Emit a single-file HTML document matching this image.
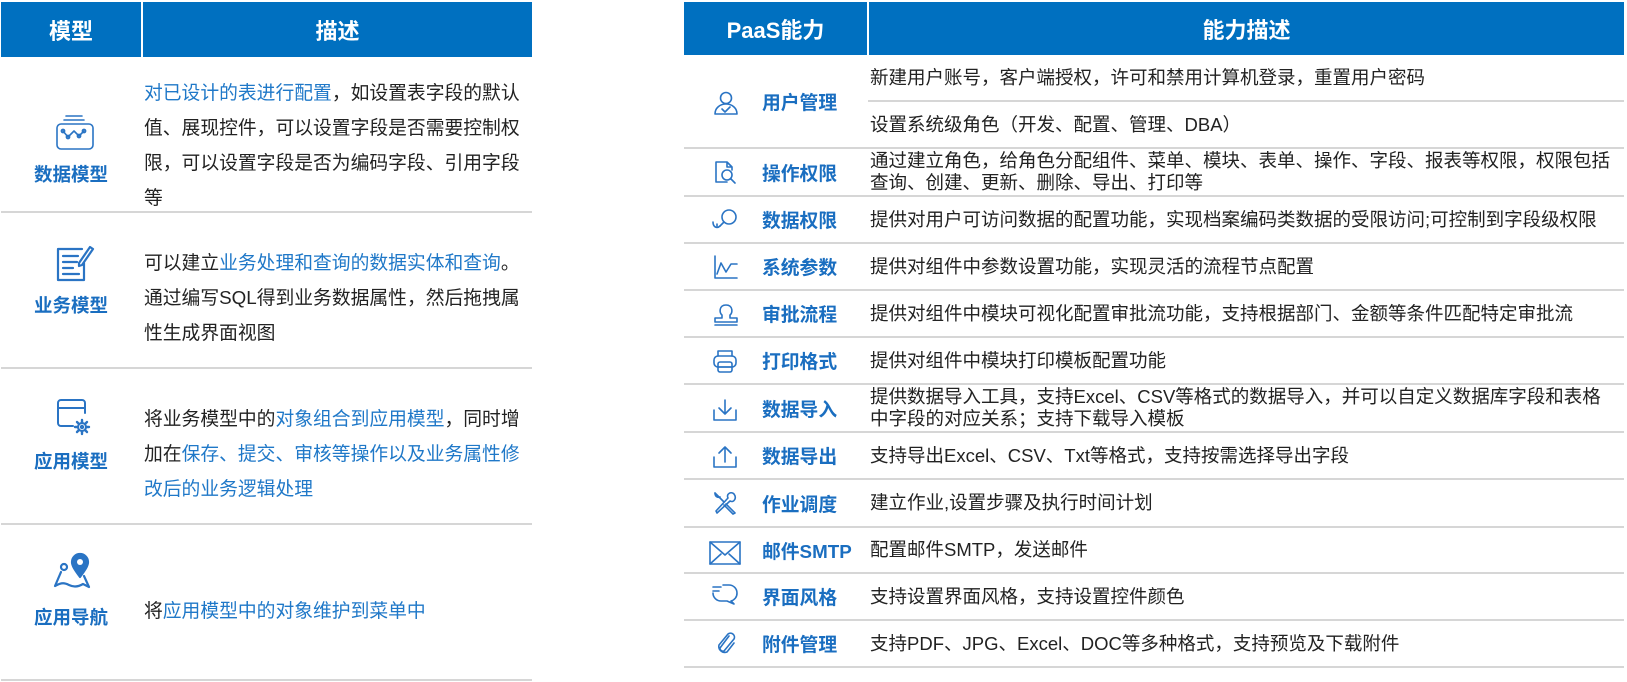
<!DOCTYPE html>
<html><head><meta charset="utf-8"><style>
*{margin:0;padding:0;box-sizing:border-box}
body{width:1627px;height:682px;background:#fff;position:relative;overflow:hidden;font-family:"Liberation Sans","Noto Sans CJK SC",sans-serif;color:#222}
.a{position:absolute}
.hd{background:#0070c0;color:#fff;font-weight:bold;font-size:22px;display:flex;align-items:center;justify-content:center}
.ln{position:absolute;height:2px;background:#d6d6d6}
.lbl{position:absolute;color:#1a6ec0;font-weight:bold;font-size:18.5px;white-space:nowrap}
.t{position:absolute;font-size:18.8px;white-space:nowrap;color:#222}
.b{color:#1f78c8}
.ic{position:absolute;fill:none;stroke:#2a74c4;stroke-width:1.6;stroke-linecap:round;stroke-linejoin:round}
.rd{position:absolute;left:870px;font-size:18.5px;white-space:nowrap;display:flex;align-items:center;line-height:22px}
.rl{position:absolute;left:762px;display:flex;align-items:center;color:#1a6ec0;font-weight:bold;font-size:18.8px;white-space:nowrap}
</style></head><body>
<div class="a hd" style="left:1px;top:2px;width:140px;height:55px">模型</div>
<div class="a hd" style="left:143px;top:2px;width:389px;height:55px">描述</div>

<div class="ln" style="left:1px;top:211px;width:531px"></div>
<div class="ln" style="left:1px;top:367px;width:531px"></div>
<div class="ln" style="left:1px;top:523px;width:531px"></div>
<div class="ln" style="left:1px;top:679px;width:531px"></div>

<div class="t" style="left:144px;top:75px;line-height:35px">
<span class="b">对已设计的表进行配置</span>，如设置表字段的默认<br>值、展现控件，可以设置字段是否需要控制权<br>限，可以设置字段是否为编码字段、引用字段<br>等</div>
<div class="t" style="left:144px;top:245px;line-height:35px">可以建立<span class="b">业务处理和查询的数据实体和查询</span>。<br>通过编写SQL得到业务数据属性，然后拖拽属<br>性生成界面视图</div>
<div class="t" style="left:144px;top:401px;line-height:35px">将业务模型中的<span class="b">对象组合到应用模型</span>，同时增<br>加在<span class="b">保存、提交、审核等操作以及业务属性修</span><br><span class="b">改后的业务逻辑处理</span></div>
<div class="t" style="left:144px;top:593px;line-height:35px">将<span class="b">应用模型中的对象维护到菜单中</span></div>

<div class="lbl" style="left:34px;top:161px">数据模型</div>
<div class="lbl" style="left:34px;top:292px">业务模型</div>
<div class="lbl" style="left:34px;top:448px">应用模型</div>
<div class="lbl" style="left:34px;top:604px">应用导航</div>

<svg class="ic" style="left:55px;top:113px" width="40" height="40" viewBox="0 0 40 40"><path d="M11 3h16M9 7h20"/><rect x="2" y="11" width="36" height="25" rx="4"/><path d="M8 18l5 6 6-6 5 5 5-5"/><circle cx="8" cy="18" r="1.6"/><circle cx="13" cy="24" r="1.6"/><circle cx="24" cy="23" r="1.6"/><circle cx="29" cy="18" r="1.6"/></svg>
<svg class="ic" style="left:55px;top:245px;stroke-width:2.2" width="40" height="38" viewBox="0 0 40 38"><path d="M27 4H3v31h26V18"/><path d="M8 11h15M8 17h14M8 23h10M8 29h16"/><path d="M35 2l3 2-11 16-3 1 0-3z"/></svg>
<svg class="ic" style="left:55px;top:398px;stroke-width:2" width="40" height="38" viewBox="0 0 40 38"><path d="M18 28H6a3 3 0 0 1-3-3V5a3 3 0 0 1 3-3h21a3 3 0 0 1 3 3v10M3 10h27"/><circle cx="27" cy="29" r="4"/><circle cx="27" cy="29" r="1.2"/><path d="M27 22v2.5M27 33.5v2.5M20 29h2.5M31.5 29h2.5M22 24l1.8 1.8M30.2 32.2l1.8 1.8M32 24l-1.8 1.8M23.8 32.2L22 34" stroke-width="2.4"/></svg>
<svg class="ic" style="left:53px;top:551px;stroke-width:2.2" width="42" height="40" viewBox="0 0 42 40"><path d="M27 26c-5-7-8-11-8-15a8 8 0 0 1 16 0c0 4-3 8-8 15z" fill="#2a74c4"/><circle cx="27" cy="11" r="3" fill="#fff" stroke="none"/><circle cx="11" cy="16" r="3"/><path d="M8 21L2 35c7-4 10-3 14-1s9 2 14-1l6 3-5-11"/></svg>

<div class="a hd" style="left:684px;top:2px;width:183px;height:53px">PaaS能力</div>
<div class="a hd" style="left:869px;top:2px;width:755px;height:53px">能力描述</div>

<div class="ln" style="left:868px;top:100px;width:756px"></div>
<div class="ln" style="left:684px;top:147px;width:940px"></div>
<div class="ln" style="left:684px;top:195px;width:940px"></div>
<div class="ln" style="left:684px;top:242px;width:940px"></div>
<div class="ln" style="left:684px;top:289px;width:940px"></div>
<div class="ln" style="left:684px;top:336px;width:940px"></div>
<div class="ln" style="left:684px;top:383px;width:940px"></div>
<div class="ln" style="left:684px;top:431px;width:940px"></div>
<div class="ln" style="left:684px;top:478px;width:940px"></div>
<div class="ln" style="left:684px;top:526px;width:940px"></div>
<div class="ln" style="left:684px;top:572px;width:940px"></div>
<div class="ln" style="left:684px;top:619px;width:940px"></div>
<div class="ln" style="left:684px;top:666px;width:940px"></div>

<div class="rl" style="top:55px;height:92px">用户管理</div>
<div class="rl" style="top:149px;height:46px">操作权限</div>
<div class="rl" style="top:197px;height:45px">数据权限</div>
<div class="rl" style="top:244px;height:45px">系统参数</div>
<div class="rl" style="top:291px;height:45px">审批流程</div>
<div class="rl" style="top:338px;height:45px">打印格式</div>
<div class="rl" style="top:385px;height:46px">数据导入</div>
<div class="rl" style="top:433px;height:45px">数据导出</div>
<div class="rl" style="top:480px;height:46px">作业调度</div>
<div class="rl" style="top:528px;height:44px">邮件SMTP</div>
<div class="rl" style="top:574px;height:45px">界面风格</div>
<div class="rl" style="top:621px;height:45px">附件管理</div>

<div class="rd" style="top:55px;height:45px">新建用户账号，客户端授权，许可和禁用计算机登录，重置用户密码</div>
<div class="rd" style="top:102px;height:45px">设置系统级角色（开发、配置、管理、DBA）</div>
<div class="rd" style="top:149px;height:46px">通过建立角色，给角色分配组件、菜单、模块、表单、操作、字段、报表等权限，权限包括<br>查询、创建、更新、删除、导出、打印等</div>
<div class="rd" style="top:197px;height:45px">提供对用户可访问数据的配置功能，实现档案编码类数据的受限访问;可控制到字段级权限</div>
<div class="rd" style="top:244px;height:45px">提供对组件中参数设置功能，实现灵活的流程节点配置</div>
<div class="rd" style="top:291px;height:45px">提供对组件中模块可视化配置审批流功能，支持根据部门、金额等条件匹配特定审批流</div>
<div class="rd" style="top:338px;height:45px">提供对组件中模块打印模板配置功能</div>
<div class="rd" style="top:385px;height:46px">提供数据导入工具，支持Excel、CSV等格式的数据导入，并可以自定义数据库字段和表格<br>中字段的对应关系；支持下载导入模板</div>
<div class="rd" style="top:433px;height:45px">支持导出Excel、CSV、Txt等格式，支持按需选择导出字段</div>
<div class="rd" style="top:480px;height:46px">建立作业,设置步骤及执行时间计划</div>
<div class="rd" style="top:528px;height:44px">配置邮件SMTP，发送邮件</div>
<div class="rd" style="top:574px;height:45px">支持设置界面风格，支持设置控件颜色</div>
<div class="rd" style="top:621px;height:45px">支持PDF、JPG、Excel、DOC等多种格式，支持预览及下载附件</div>

<svg class="ic" style="left:713px;top:90px" width="26" height="26" viewBox="0 0 26 26"><circle cx="13" cy="8" r="5.5"/><path d="M2 24c0-6 5-10 11-10s11 4 11 10H2z"/><path d="M9 19l3 3 5-5"/></svg>
<svg class="ic" style="left:713px;top:160px" width="26" height="26" viewBox="0 0 26 26"><path d="M14 22H3V2h11l5 5v3M14 2v5h5"/><circle cx="14" cy="15" r="5"/><path d="M18 19l4 4"/></svg>
<svg class="ic" style="left:711px;top:207px" width="28" height="26" viewBox="0 0 28 26"><circle cx="18" cy="10" r="7"/><path d="M13 15l-4 4"/><path d="M2 15c0 5 4 7 7 4"/><path d="M6 17v2"/></svg>
<svg class="ic" style="left:713px;top:254px" width="26" height="26" viewBox="0 0 26 26"><path d="M2 2v22h22"/><path d="M4 20l4-11 5 9 5-8h6"/></svg>
<svg class="ic" style="left:713px;top:301px" width="26" height="26" viewBox="0 0 26 26"><path d="M9 14c-3-2-3-10 4-10s7 8 4 10v3h7v4H2v-4h7z"/><path d="M2 24h22"/></svg>
<svg class="ic" style="left:712px;top:348px" width="26" height="26" viewBox="0 0 26 26"><path d="M6 8V3h14v5"/><rect x="2" y="8" width="22" height="11" rx="4"/><rect x="6" y="14" width="14" height="10" rx="2"/><path d="M6 19h14"/></svg>
<svg class="ic" style="left:712px;top:397px" width="26" height="26" viewBox="0 0 26 26"><path d="M2 13v10h22V13"/><path d="M13 3v14M7 11l6 6 6-6"/></svg>
<svg class="ic" style="left:712px;top:444px" width="26" height="26" viewBox="0 0 26 26"><path d="M2 13v10h22V13"/><path d="M13 18V3M7 9l6-6 6 6"/></svg>
<svg class="ic" style="left:712px;top:490px" width="26" height="26" viewBox="0 0 26 26"><path d="M3 3l9 9M14 14l9 9-2 1-9-9"/><path d="M3 3c0 3 2 5 5 4"/><path d="M22 4c-3-3-8 0-6 4l-12 13 1 2 13-12c4 2 7-3 4-7z"/></svg>
<svg class="ic" style="left:708px;top:540px" width="34" height="26" viewBox="0 0 34 26"><rect x="2" y="2" width="30" height="22"/><path d="M2 2l15 13L32 2M2 24l11-10M32 24L21 14"/></svg>
<svg class="ic" style="left:711px;top:582px" width="28" height="26" viewBox="0 0 28 26"><path d="M2 5h8M2 9h6"/><path d="M12 3h6a8 8 0 0 1 8 8 8 8 0 0 1-6 8l3 3-7-3h-6a8 8 0 0 1-8-8"/></svg>
<svg class="ic" style="left:714px;top:631px" width="24" height="26" viewBox="0 0 24 26"><path d="M15 5L6 17a3 3 0 0 0 4 3l10-12a4 4 0 0 0-6-5L5 14a6 6 0 0 0 8 7l7-9"/></svg>
</body></html>
